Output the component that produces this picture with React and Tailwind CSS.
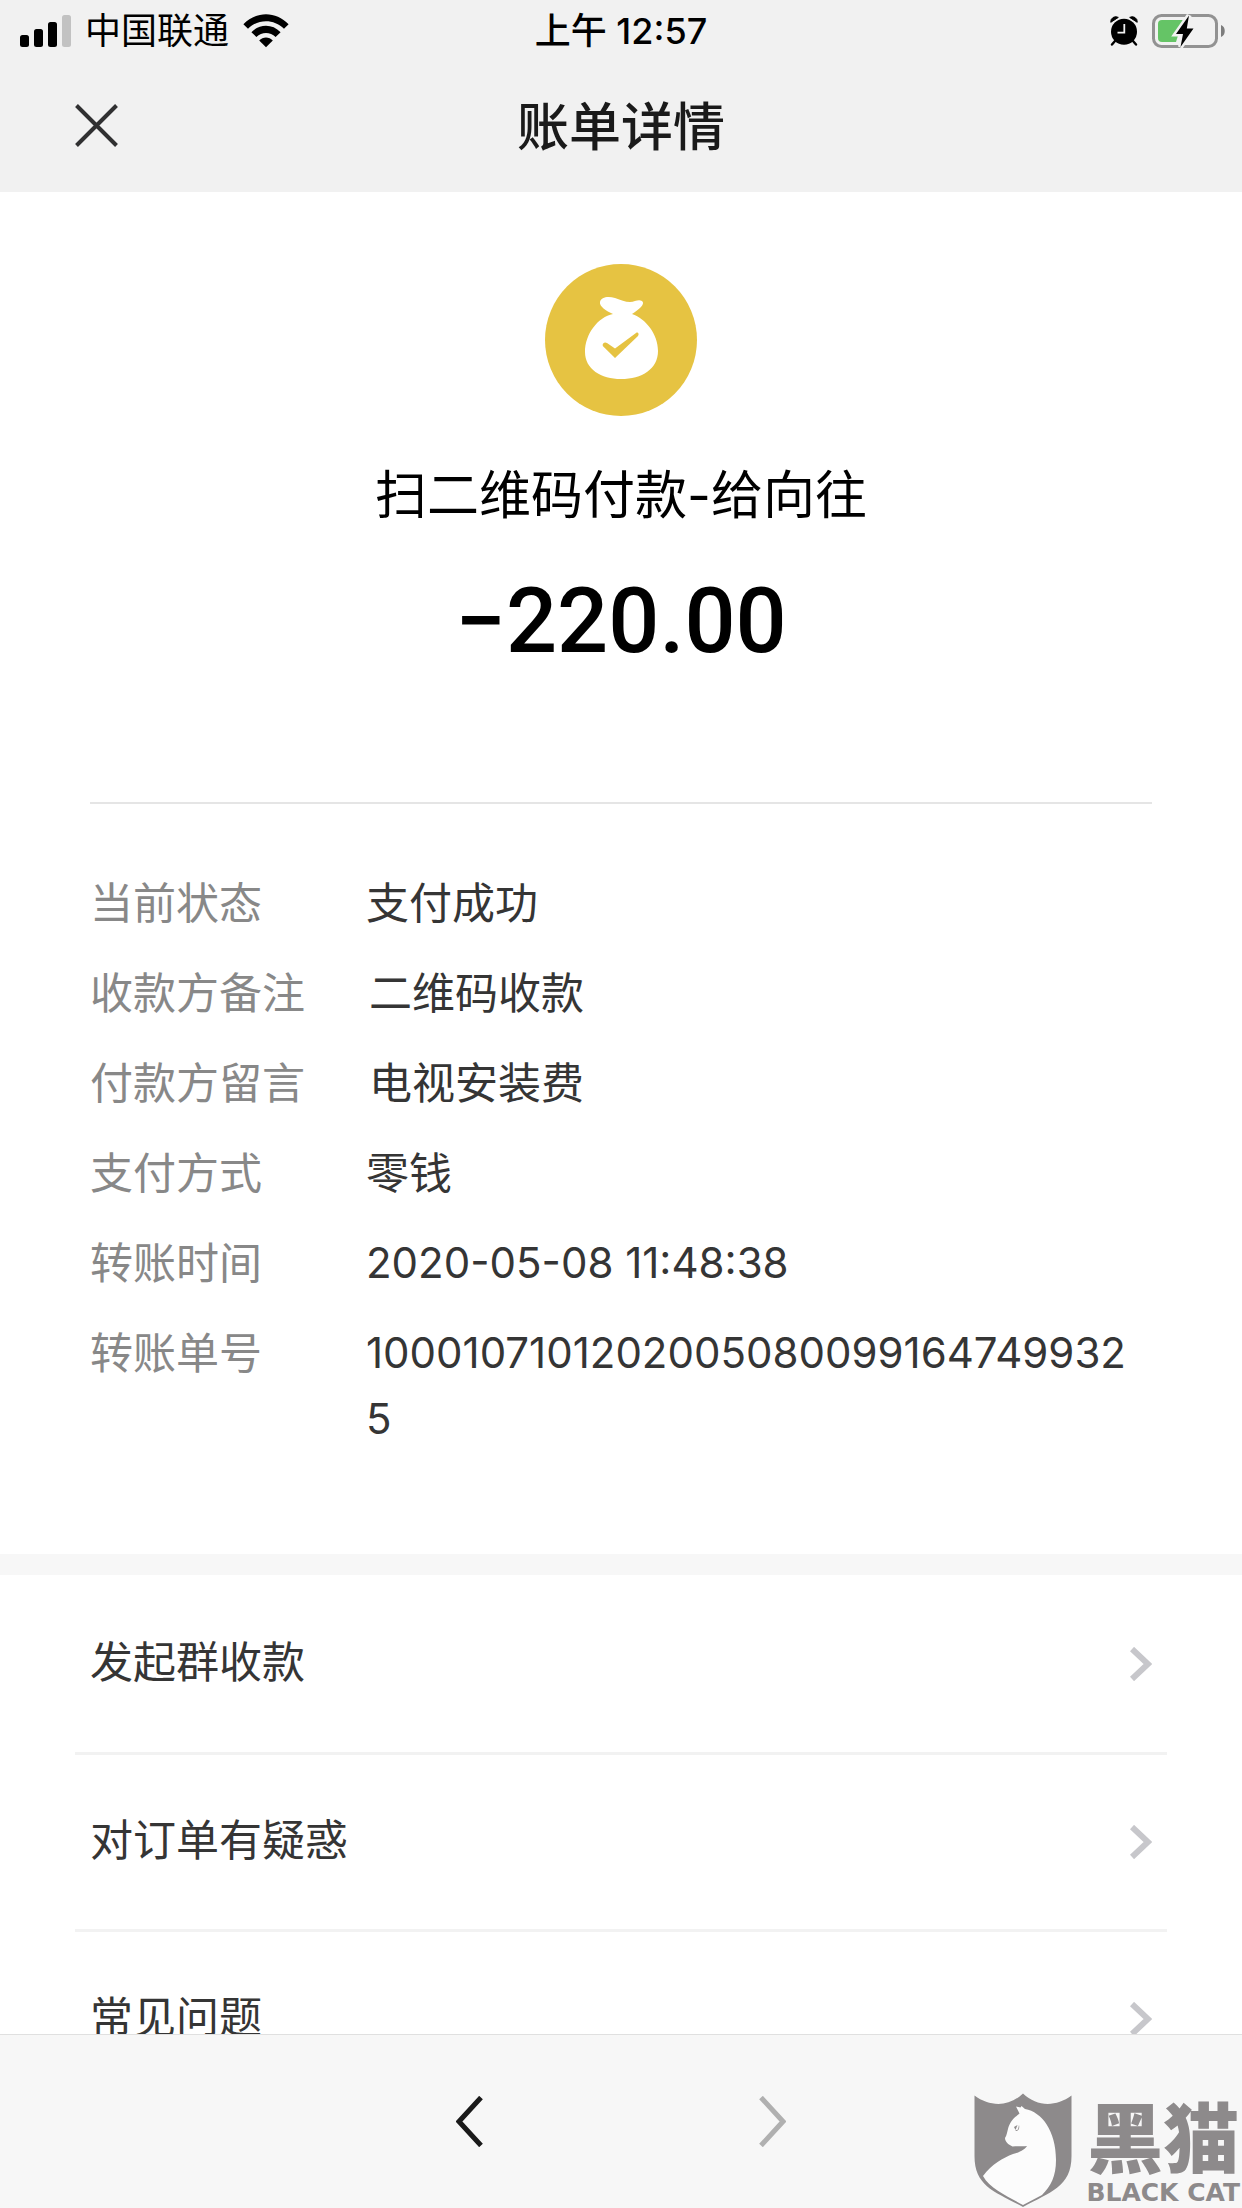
import React from "react";

const details = [
  { label: "当前状态", value: "支付成功" },
  { label: "收款方备注", value: "二维码收款" },
  { label: "付款方留言", value: "电视安装费" },
  { label: "支付方式", value: "零钱" },
  { label: "转账时间", value: "2020-05-08 11:48:38", numeric: true },
  { label: "转账单号", value: "10001071012020050800991647499325", numeric: true },
];

const links = ["发起群收款", "对订单有疑惑", "常见问题"];

function SignalIcon() {
  return (
    <svg width="51" height="32" viewBox="0 0 51 32" aria-hidden="true">
      <rect x="0" y="20" width="9" height="12" rx="2.5" />
      <rect x="14" y="14" width="9" height="18" rx="2.5" />
      <rect x="28" y="7" width="9" height="25" rx="2.5" />
      <rect x="42" y="0" width="9" height="32" rx="2.5" fill="#c2c2c2" />
    </svg>
  );
}

function WifiIcon() {
  return (
    <svg width="46" height="34" viewBox="0 0 46 34" aria-hidden="true">
      <path d="M0.4 10.2C13-3.2 33-3.2 45.6 10.2L41 14.8C31 4.6 15 4.6 5 14.8Z" />
      <path d="M8.4 18.2C16.6 9.6 29.4 9.6 37.6 18.2L32.6 23C27.2 17.6 18.8 17.6 13.4 23Z" />
      <path d="M16.2 26.4C20 22.4 26 22.4 29.8 26.4L23 33.2Z" />
    </svg>
  );
}

function AlarmIcon() {
  return (
    <svg width="28" height="30" viewBox="0 0 28 30" aria-hidden="true">
      <path d="M0.8 6.3A5 5 0 0 1 8.3 1.4Z" stroke="#000" strokeLinejoin="round" />
      <path d="M27.2 6.3A5 5 0 0 0 19.7 1.4Z" stroke="#000" strokeLinejoin="round" />
      <circle cx="14" cy="15.8" r="14" fill="#f1f1f1" />
      <path d="M5 25L2 28.5M23 25L26 28.5" stroke="#000" strokeWidth="2.4" strokeLinecap="round" />
      <circle cx="14" cy="15.8" r="13" />
      <path d="M14.3 8V16.7H7.5" fill="none" stroke="#f1f1f1" strokeWidth="1.8" />
    </svg>
  );
}

function BatteryIcon() {
  return (
    <svg width="74" height="34" viewBox="0 0 74 34" aria-hidden="true">
      <rect x="1.5" y="1.5" width="63" height="31" rx="8" fill="none" stroke="#929292" strokeWidth="3" />
      <path d="M69 11C74 12.5 74 21.5 69 23Z" fill="#7d7d7d" />
      <path d="M10 6H31L24 28H10A4 4 0 0 1 6 24V10A4 4 0 0 1 10 6Z" fill="#65c466" />
      <path d="M37 1.5L24 20H31L28.5 33L41.5 14.5H34.8Z" fill="#000" stroke="#f1f1f1" strokeWidth="5" paintOrder="stroke" />
    </svg>
  );
}

function MoneyBagIcon() {
  return (
    <svg width="152" height="152" viewBox="0 0 152 152" aria-hidden="true">
      <circle cx="76" cy="76" r="76" fill="#e6c342" />
      <path
        d="M68 50C61 47 54 42 55 38C56 33 63 32 70 34C76 36 80 38 85 38C90 38 93 35 97 37C101 40 93 46 87 50C101 55 113 70 113 87C113 105 97 115 76 115C56 115 40 105 40 88C40 70 53 53 68 50Z"
        fill="#fff"
      />
      <path d="M57.8 82C57 79 60 77.5 62 79L70 84.5L91 69C93 67.5 94.5 70 93 72L70 94Z" fill="#e6c342" />
    </svg>
  );
}

function ShieldCatLogo() {
  return (
    <svg width="98" height="115" viewBox="0 0 98 115" aria-hidden="true">
      <path d="M0.5 2.5C16 14 35 14 49 0.5C63 14 82 14 97.5 2.5V63C97.5 94 76 99 49 114C22 99 0.5 94 0.5 63Z" fill="#8d8a8b" />
      <path
        d="M45.5 20.5L42 13.5L46.5 14.5L47.5 13L51 16C68 19 82 38 82 67C82 83 77 93 68 102L49 112C35 104 16 96 9 83C18 71 29 65 39 61C47 59 51 56 53 53C47 53.5 43 53 38.5 53.5C35 52 31 49 31 45C33 42 33 39 34.5 34C37 27 41 24 45.5 20.5Z"
        fill="#fcfcfc"
      />
      <path d="M40 34L43.5 32L41.5 37Z" fill="#8d8a8b" />
      <path d="M45 32L44 36.5L41 37.5C44 39 46 36 45 32Z" fill="#8d8a8b" />
    </svg>
  );
}

function Stroke({ className, width, height, d, strokeWidth }) {
  return (
    <svg
      className={className}
      width={width}
      height={height}
      viewBox={`0 0 ${width} ${height}`}
      fill="none"
      stroke="currentColor"
      strokeWidth={strokeWidth}
      aria-hidden="true"
    >
      <path d={d} />
    </svg>
  );
}

export default function App() {
  return (
    <div className="flex h-screen flex-col overflow-hidden bg-white font-['Inter','Noto_Sans_CJK_SC',sans-serif] text-[#353535]">
      <header className="shrink-0 bg-[#f1f1f1] text-black">
        <div className="grid grid-cols-[1fr_auto_1fr] items-center px-4 text-[36px] leading-[62px]">
          <div className="flex items-center gap-[14px] pl-1">
            <SignalIcon />
            <span>中国联通</span>
            <WifiIcon />
          </div>
          <time className="font-medium">上午 12:57</time>
          <div className="flex items-center justify-end gap-[14px]">
            <AlarmIcon />
            <BatteryIcon />
          </div>
        </div>
        <div className="grid grid-cols-[1fr_auto_1fr] items-start px-[75px] pt-[30px] pb-7">
          <button type="button" aria-label="关闭" className="mt-3 justify-self-start text-[#303031]">
            <Stroke width={43} height={43} strokeWidth={4} d="M1.5 1.5L41.5 41.5M41.5 1.5L1.5 41.5" />
          </button>
          <h1 className="text-[52px] leading-[72px] font-medium text-[#1a1a1a]">账单详情</h1>
        </div>
      </header>

      <main className="min-h-0 flex-1 overflow-y-auto [scrollbar-width:none]">
        <section className="px-[90px] pt-[72px] pb-[102px]">
          <div className="flex flex-col items-center border-b-2 border-[#e5e5e5] pb-32 text-black">
            <MoneyBagIcon />
            <h2 className="mt-11 text-[52px] leading-[72px]">扫二维码付款-给向往</h2>
            <p className="mt-[38px] font-['Roboto',sans-serif] text-[90px] leading-[104px] font-medium">−220.00</p>
          </div>
          <dl className="mt-[66px] flex flex-col gap-6 text-[43px] leading-[66px]">
            {details.map(({ label, value, numeric }) => (
              <div key={label} className="flex gap-16">
                <dt className="min-w-[212px] shrink-0 text-[#888]">{label}</dt>
                <dd className={numeric ? "min-w-0 pr-4 text-[42px] break-all" : "min-w-0 pr-4 break-all"}>{value}</dd>
              </div>
            ))}
          </dl>
        </section>

        <nav className="border-t-21 border-[#f7f7f7] px-[75px]">
          {links.map((label) => (
            <a
              key={label}
              href="#"
              className="flex h-[177px] items-center justify-between border-t-3 border-[#f2f2f2] px-[15px] text-[43px] leading-[66px] first:border-t-0"
            >
              <span className="pb-1">{label}</span>
              <Stroke className="text-[#c7c7cb]" width={22} height={34} strokeWidth={6} d="M2 2L18 17L2 32" />
            </a>
          ))}
        </nav>
      </main>

      <footer className="relative flex h-[174px] shrink-0 items-center justify-center gap-[276px] border-t border-[#e0e0e0] bg-[#f7f7f7]">
        <button type="button" aria-label="后退" className="text-[#1a1a1a]">
          <Stroke width={27} height={51} strokeWidth={5} d="M25 1.5L3 25.5L25 49.5" />
        </button>
        <button type="button" aria-label="前进" disabled className="text-[#b0b0b0]">
          <Stroke width={27} height={51} strokeWidth={5} d="M2 1.5L24 25.5L2 49.5" />
        </button>
        <div className="absolute right-[2px] bottom-0 flex items-end gap-[14px] text-[#8d8a8b]">
          <ShieldCatLogo />
          <div className="flex flex-col items-center gap-3">
            <span className="font-['Noto_Sans_CJK_SC',sans-serif] text-[76px] leading-[64px] font-black">黑猫</span>
            <span className="font-['DejaVu_Sans',sans-serif] text-[25px] leading-[30px] font-bold whitespace-nowrap">BLACK CAT</span>
          </div>
        </div>
      </footer>
    </div>
  );
}
